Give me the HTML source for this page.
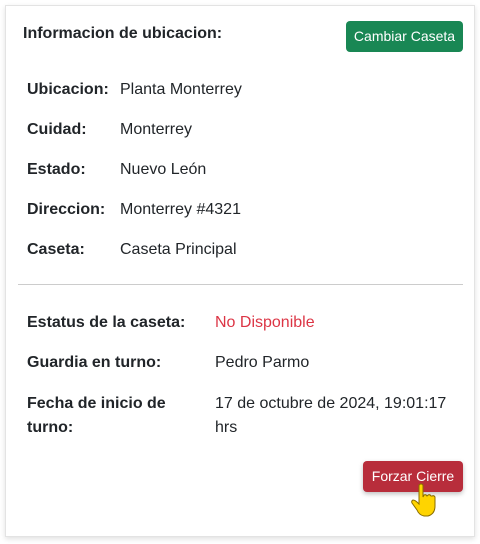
<!DOCTYPE html>
<html><head><meta charset="utf-8"><style>
*{margin:0;padding:0;box-sizing:border-box}
body{width:480px;height:544px;background:#fff;font-family:"Liberation Sans",sans-serif;color:#212529;position:relative;overflow:hidden}
.card{position:absolute;left:5px;top:5px;width:470px;height:532px;border:1px solid #e3e3e3;box-shadow:0 2px 5px rgba(0,0,0,.12);background:#fff}
.t{position:absolute;font-size:16px;line-height:20px;white-space:nowrap}
.b{font-weight:bold}
.btn{position:absolute;color:#fff;font-size:14px;border-radius:4px;text-align:center;line-height:31px}
</style></head><body>
<div class="card"></div>
<div class="t b" style="left:23px;top:24px">Informacion de ubicacion:</div>
<div class="btn" style="left:346px;top:21px;width:117px;height:31px;background:#198754">Cambiar Caseta</div>
<div class="t b" style="left:27px;top:80px">Ubicacion:</div><div class="t" style="left:120px;top:80px">Planta Monterrey</div>
<div class="t b" style="left:27px;top:120px">Cuidad:</div><div class="t" style="left:120px;top:120px">Monterrey</div>
<div class="t b" style="left:27px;top:160px">Estado:</div><div class="t" style="left:120px;top:160px">Nuevo León</div>
<div class="t b" style="left:27px;top:200px">Direccion:</div><div class="t" style="left:120px;top:200px">Monterrey #4321</div>
<div class="t b" style="left:27px;top:240px">Caseta:</div><div class="t" style="left:120px;top:240px">Caseta Principal</div>
<div style="position:absolute;left:18px;top:284px;width:445px;height:1px;background:#ccc"></div>
<div class="t b" style="left:27px;top:313px">Estatus de la caseta:</div><div class="t" style="left:215px;top:313px;color:#dc3545">No Disponible</div>
<div class="t b" style="left:27px;top:353px">Guardia en turno:</div><div class="t" style="left:215px;top:353px">Pedro Parmo</div>
<div class="t b" style="left:27px;top:392px;line-height:24px">Fecha de inicio de<br>turno:</div>
<div class="t" style="left:215px;top:392px;line-height:24px">17 de octubre de 2024, 19:01:17<br>hrs</div>
<div class="btn" style="left:363px;top:461px;width:100px;height:31px;background:#b82d3b;box-shadow:0 2px 5px rgba(0,0,0,.25)">Forzar Cierre</div>
<svg style="position:absolute;left:409px;top:483px" width="30" height="36" viewBox="0 0 30 36">
<path d="M10 3 Q10 1 12 1 Q14 1 14 3 L14 14 L15 12 Q17 11 18 13 L19 12 Q21 11 22 13 L23 13 Q25 12 26 14 L26 23 Q26 31 19 33 L15 33 Q10 32 8 27 L3 20 Q2 18 4 17 Q6 17 9 20 L10 21 Z" fill="#ffd400" stroke="#8a6d00" stroke-width="1"/>
</svg>
</body></html>
